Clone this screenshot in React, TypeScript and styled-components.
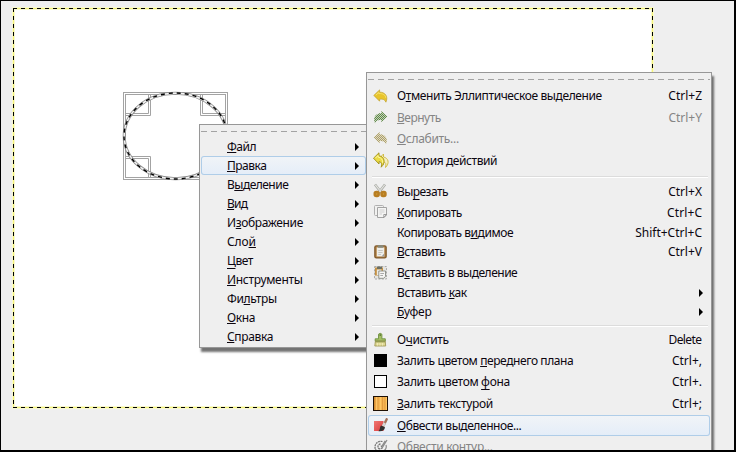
import React from "react";
import styled, { createGlobalStyle } from "styled-components";

const GlobalStyle = createGlobalStyle`
  body { margin: 0; background: #000; }
  * { box-sizing: border-box; }
`;

const Frame = styled.div`
  position: relative;
  width: 736px;
  height: 452px;
  overflow: hidden;
  background: #efefef;
  font-family: "Noto Sans", "Open Sans", sans-serif;
  font-size: 12px;
  color: #0c0610;
`;

const Bezel = styled.div`
  position: absolute;
  inset: 0;
  border: solid #000;
  border-width: 1px 2px 2px 1px;
  z-index: 5;
`;

const Artboard = styled.svg`
  position: absolute;
  left: 13px;
  top: 8px;
  width: 640px;
  height: 400px;
  display: block;
  overflow: visible;
`;

const MenuPanel = styled.div<{ $x: number; $y: number; $w: number }>`
  position: absolute;
  left: ${(p) => p.$x}px;
  top: ${(p) => p.$y}px;
  width: ${(p) => p.$w}px;
  display: flex;
  flex-direction: column;
  padding: 0 1px 1px;
  background: #efefef;
  border: 1px solid #979797;
  box-shadow: 2px 4px 2px 0 rgba(0, 0, 0, 0.55);
`;

const TearOff = styled.div`
  height: 12px;
  flex: none;
  padding: 6px 0 5px;
  background: repeating-linear-gradient(90deg, #a3a3a3 0 6px, transparent 6px 10px) content-box;
`;

const Row = styled.div<{ $h: number; $icons?: boolean; $active?: boolean; $muted?: boolean }>`
  display: flex;
  align-items: center;
  flex: none;
  height: ${(p) => p.$h}px;
  padding: 0 ${(p) => (p.$icons ? 8 : 7)}px 0 ${(p) => (p.$icons ? 5 : 26)}px;
  border-radius: 3px;
  color: ${(p) => (p.$muted ? "#858585" : "inherit")};
  background: ${(p) => (p.$active ? "linear-gradient(#f1f4f7, #e4edf8)" : "none")};
  box-shadow: ${(p) => (p.$active ? "inset 0 0 0 1px #afcde8" : "none")};
`;

const IconCell = styled.span<{ $top: number }>`
  flex: none;
  align-self: flex-start;
  width: 24px;
  height: 16px;
  margin-top: ${(p) => p.$top}px;
  svg { display: block; }
`;

const Label = styled.span<{ $track: number }>`
  flex: 1;
  white-space: pre;
  line-height: 16px;
  letter-spacing: ${(p) => p.$track}px;
`;

const Mnemonic = styled.span<{ $low: boolean }>`
  text-decoration: underline;
  text-decoration-thickness: 1px;
  text-decoration-skip-ink: none;
  text-underline-offset: ${(p) => (p.$low ? 3 : 1)}px;
`;

const Shortcut = styled.span<{ $track: number }>`
  white-space: pre;
  line-height: 16px;
  letter-spacing: ${(p) => p.$track}px;
  margin-right: ${(p) => -p.$track}px;
`;

const Arrow = styled.svg<{ $nudge?: number }>`
  flex: none;
  width: 4px;
  height: 8px;
  margin-right: ${(p) => -(p.$nudge ?? 0)}px;
`;

const Rule = styled.div`
  flex: none;
  height: 9px;
  margin: 0 2px 0 4px;
  padding: 4px 0 3px;
  background: linear-gradient(#dcdcdc 50%, #fff 50%) content-box;
`;

type IconName =
  | "undo" | "redo" | "fade" | "history" | "cut" | "copy" | "paste" | "pasteInto"
  | "clear" | "black" | "white" | "pattern" | "stroke" | "path";

const CURVED_ARROW = "M.8 7.4 6.6 1.9V4.2C12 4 15.6 8.4 12.9 14.2 12 11.6 10.2 10.8 6.6 11.2V13.2Z";

const icons: Record<IconName, React.ReactNode> = {
  undo: (
    <>
      <path d={CURVED_ARROW} fill="#e8c42c" stroke="#c0a12c" strokeWidth=".7" strokeLinejoin="round" />
      <path d="M2.8 7.2 5.8 4.5V5.6C10 5.3 12.5 7 12.8 9.8" fill="none" stroke="#f6e36c" />
    </>
  ),
  redo: (
    <g transform="translate(15 0) scale(-1 1)">
      <path d={CURVED_ARROW} fill="#c3d3b9" />
      <path d={CURVED_ARROW} fill="url(#dotGreen)" />
    </g>
  ),
  fade: (
    <>
      <path d={CURVED_ARROW} fill="#e0dac0" />
      <path d={CURVED_ARROW} fill="url(#dotTan)" />
    </>
  ),
  history: (
    <>
      <path d="M5.5 7 10.5 2V5C15.3 6 17 11 12.5 15.5 13.3 11.8 13 10.5 10.5 9.8V12.5Z" fill="#f5efc0" stroke="#cfb83c" strokeWidth=".9" />
      <path d="M.5 6.2 6 .8V3.8C11.5 4.6 13 10.5 8.2 15.2 9.2 11.5 8.5 10 6 9.6V12Z" fill="#ebdc46" stroke="#a08e18" strokeWidth=".9" />
      <path d="M2.5 6 5 3.5V5C8.5 5.5 10 8 9.7 11" fill="none" stroke="#fff8a0" />
    </>
  ),
  cut: (
    <>
      <path d="M2 1.5 8.5 10M12 1.5 5.5 10" stroke="#a9aba6" strokeWidth="2.6" />
      <path d="M2.3 1.8 8 9M11.7 1.8 6 9" stroke="#e5e5e0" strokeWidth="1.1" />
      <rect x="1.8" y="9" width="3.8" height="4" rx="1.4" fill="#cf9a35" stroke="#b87e22" strokeWidth="2.6" />
      <rect x="8.6" y="9" width="3.8" height="4" rx="1.4" fill="#cf9a35" stroke="#b87e22" strokeWidth="2.6" />
    </>
  ),
  copy: (
    <>
      <rect x="1.5" y="1.5" width="9" height="10" rx="1" fill="#f1f1f0" stroke="#b0b0b0" />
      <path d="M4.5 3.5H13.5V11L11 13.5H4.5Z" fill="#f4f4f3" stroke="#a3a3a3" />
      <path d="M6.5 6H11.5M6.5 8H11.5M6.5 10H9" stroke="#d0d0d0" />
      <path d="M13.5 10.5H10.8V13.5Z" fill="#fff" stroke="#858585" strokeWidth=".8" />
    </>
  ),
  paste: (
    <>
      <rect x="1.9" y="1.9" width="11.2" height="12" rx="1.4" fill="#b98a4e" stroke="#80592a" strokeWidth="1.4" />
      <path d="M3.8 3.5H11.2V12.4H3.8Z" fill="#eeeeea" />
      <rect x="4.8" y="1.2" width="5.6" height="2.6" rx=".8" fill="#868a7e" />
      <path d="M5.3 6.5H9.8M5.3 8.5H9.5M5.3 10.5H8" stroke="#c6c6c1" />
      <path d="M11.2 9.6 8.5 12.4H11.2Z" fill="#999" />
    </>
  ),
  pasteInto: (
    <>
      <rect x="1.5" y="1.5" width="12" height="12.5" fill="#e4e4e1" stroke="#aaa" strokeDasharray="2 1.4" />
      <path d="M2 2.5H10V10.5H2Z" fill="#c39042" />
      <path d="M3.8 4.5H8.5V10H3.8Z" fill="#ecebe3" />
      <rect x="4" y="1.5" width="5" height="2.5" fill="#6c7064" />
      <path d="M5.8 6H12.5V11.5L10.5 13.3H5.8Z" fill="#f6f6f4" stroke="#888b84" strokeWidth=".9" />
      <path d="M7.3 8.5H11M7.3 10.5H10" stroke="#aaa" />
    </>
  ),
  clear: (
    <>
      <path d="M5.5 2.2Q7.2 .4 8.9 2.2V6.8H12.3V9H2.2V6.8H5.5Z" fill="#a3bf63" stroke="#6e9140" strokeWidth=".9" />
      <path d="M2.4 9H12.2L12.7 14H1.8Z" fill="#e0d994" stroke="#a29a58" strokeWidth=".9" />
      <path d="M2.4 9.8H12.2" stroke="#7f8a42" />
      <path d="M7.2 2.2V4" stroke="#47632c" />
      <path d="M4.5 11V13.5M7 11V13.5M9.5 11V13.5" stroke="#eee9b8" />
    </>
  ),
  black: <rect x="1" y="1" width="13" height="13" fill="#000" />,
  white: <rect x="1.5" y="1.5" width="12" height="12" fill="#fff" stroke="#000" />,
  pattern: (
    <>
      <rect x=".5" y=".5" width="14" height="14" fill="#f5b552" stroke="#1d1005" />
      <path d="M1.8 1V14" stroke="#d3892f" strokeWidth="1.4" />
      <path d="M3.6 1V14" stroke="#ffc566" strokeWidth="1.4" />
      <path d="M5 1V14M9.5 1V14M12 1V14" stroke="#dd9638" strokeWidth=".8" />
      <path d="M7.5 1V14M13.4 1V14" stroke="#ffc863" strokeWidth="1.2" />
    </>
  ),
  stroke: (
    <>
      <rect x="1" y="3" width="9.5" height="10" fill="url(#redFill)" />
      <path d="M13.7 1.2 10.5 7.6" stroke="#a5725a" strokeWidth="2.4" strokeLinecap="round" />
      <path d="M11.8 5 10 8.2" stroke="#d6d6d6" strokeWidth="2.6" />
      <path d="M8 7.5 12 9.3C11.5 12.8 9 13.5 5.5 13.2 7.5 11.5 6.5 9 8 7.5Z" fill="#30302f" />
    </>
  ),
  path: (
    <>
      <path d="M9.5 2.5C6 1.5 2 4 2 8S5 13 8 12M7.5 5C4.5 5.2 4 9.5 7 10 9.8 10 9.5 6.8 7.7 7.2" fill="none" stroke="#777" strokeWidth="1.3" strokeDasharray="2 .6" />
      <path d="M14 1 8.7 9.7M12.2 1.8 9 7M13 6C14 9 12 12.5 8 13" stroke="#8b8b8b" strokeWidth="1.2" fill="none" />
    </>
  ),
};

const Icon = ({ name }: { name: IconName }) => (
  <svg width="16" height="16" viewBox="0 0 16 16" fill="none">{icons[name]}</svg>
);

type Item = {
  text: string;
  h: number;
  track?: number;
  low?: boolean;
  shortcut?: string;
  shortcutTrack?: number;
  icon?: IconName;
  iconTop?: number;
  arrow?: boolean;
  active?: boolean;
  muted?: boolean;
};

/* An underscore marks the letter that follows it as the mnemonic. */
const mainItems: Item[] = [
  { text: "_Файл", h: 19, track: -0.5 },
  { text: "_Правка", h: 19, track: -0.5, active: true },
  { text: "В_ыделение", h: 19, track: -0.52 },
  { text: "_Вид", h: 19, track: -0.7 },
  { text: "И_зображение", h: 19, track: -0.36 },
  { text: "Сло_й", h: 19, track: -0.1 },
  { text: "_Цвет", h: 19, track: -0.45, low: true },
  { text: "_Инструменты", h: 19, track: -0.3 },
  { text: "Фи_льтры", h: 19, track: -0.35 },
  { text: "_Окна", h: 19, track: -0.4 },
  { text: "_Справка", h: 19, track: -0.35 },
];

const editGroups: Item[][] = [
  [
    { text: "О_тменить Эллиптическое выделение", h: 22, track: -0.4, icon: "undo", iconTop: 3, shortcut: "Ctrl+Z" },
    { text: "_Вернуть", h: 21, track: -0.5, icon: "redo", shortcut: "Ctrl+Y", muted: true },
    { text: "_Ослабить...", h: 21, track: -0.3, icon: "fade", muted: true },
    { text: "_История действий", h: 23, track: -0.43, icon: "history", iconTop: 3 },
  ],
  [
    { text: "Вы_резать", h: 21, track: -0.55, icon: "cut", shortcut: "Ctrl+X", low: true },
    { text: "_Копировать", h: 21, track: -0.4, icon: "copy", shortcut: "Ctrl+C", shortcutTrack: 0.1 },
    { text: "Копировать в_идимое", h: 19, track: -0.44, shortcut: "Shift+Ctrl+C" },
    { text: "_Вставить", h: 20, track: -0.5, icon: "paste", shortcut: "Ctrl+V" },
    { text: "В_ставить в выделение", h: 21, track: -0.5, icon: "pasteInto", iconTop: 3 },
    { text: "Вставить _как", h: 19, track: -0.42, arrow: true },
    { text: "_Буфер", h: 19, track: -0.25, arrow: true },
  ],
  [
    { text: "О_чистить", h: 20, track: -0.4, icon: "clear", shortcut: "Delete", shortcutTrack: -0.6 },
    { text: "Залить цветом _переднего плана", h: 21, track: -0.41, icon: "black", iconTop: 3, shortcut: "Ctrl+," },
    { text: "Залить цветом _фона", h: 22, track: -0.34, icon: "white", iconTop: 3, shortcut: "Ctrl+.", low: true },
    { text: "_Залить текстурой", h: 22, track: -0.32, icon: "pattern", iconTop: 3, shortcut: "Ctrl+;" },
    { text: "_Обвести выделенное...", h: 21, track: -0.43, icon: "stroke", iconTop: 3, active: true },
    { text: "Обвести _контур...", h: 21, track: -0.32, icon: "path", iconTop: 3, muted: true },
  ],
];

const MenuText = ({ item }: { item: Item }) => {
  const [before, after] = item.text.split("_");
  return (
    <Label $track={item.track ?? 0}>
      {before}
      <Mnemonic $low={!!item.low}>{after[0]}</Mnemonic>
      {after.slice(1)}
    </Label>
  );
};

const SubmenuArrow = ({ nudge }: { nudge?: number }) => (
  <Arrow $nudge={nudge} viewBox="0 0 4 8"><path d="M0 0 4 4 0 8Z" fill="#000" /></Arrow>
);

const Canvas = () => (
  <Artboard viewBox="0 0 640 400" fill="none">
    <rect x=".5" y=".5" width="639" height="399" fill="#fff" stroke="#f9f9cf" strokeWidth="3" />
    <rect x=".5" y=".5" width="639" height="399" stroke="#f5f57c" />
    <path d="M0 .5H640M0 399.5H640M.5 0V400M639.5 0V400" stroke="#000" strokeDasharray="4 4" />
    <g transform="translate(110 84)">
      <g stroke="#a3a3a3">
        <rect x=".5" y=".5" width="104" height="87" />
        <rect x="2.5" y="2.5" width="100" height="83" />
        <path d="M25.5 2V21.5H2M27.5 2V23.5H2M79.5 2V21.5H103M77.5 2V23.5H103M25.5 86V66.5H2M27.5 86V64.5H2" />
      </g>
      <ellipse cx="52.5" cy="44" rx="51.3" ry="42.7" stroke="#8b8b8b" strokeWidth="3" />
      <ellipse cx="52.5" cy="44" rx="51.3" ry="42.7" stroke="#f4f4f4" strokeWidth="1.4" />
      <ellipse cx="52.5" cy="44" rx="51.5" ry="43" stroke="#000" strokeWidth="1.4" strokeDasharray="4 4" />
    </g>
  </Artboard>
);

const PatternDefs = styled.svg`
  position: absolute;
  width: 0;
  height: 0;
`;

export default function App() {
  return (
    <>
      <GlobalStyle />
      <Frame>
        <PatternDefs>
          <defs>
            <pattern id="dotGreen" width="2" height="2" patternUnits="userSpaceOnUse">
              <path d="M0 0H1V1H0ZM1 1H2V2H1Z" fill="#5f8748" />
            </pattern>
            <pattern id="dotTan" width="2" height="2" patternUnits="userSpaceOnUse">
              <path d="M0 0H1V1H0ZM1 1H2V2H1Z" fill="#ab9f6b" />
            </pattern>
            <linearGradient id="redFill" x1="0" x2="1" y1="0" y2="1">
              <stop offset="0" stopColor="#ef7774" />
              <stop offset="1" stopColor="#d93a3c" />
            </linearGradient>
          </defs>
        </PatternDefs>
        <Canvas />
        <MenuPanel $x={199} $y={124} $w={169}>
          <TearOff />
          {mainItems.map((item) => (
            <Row key={item.text} $h={item.h} $active={item.active}>
              <MenuText item={item} />
              <SubmenuArrow />
            </Row>
          ))}
        </MenuPanel>
        <MenuPanel $x={366} $y={72} $w={346}>
          <TearOff />
          {editGroups.map((group, i) => (
            <React.Fragment key={i}>
              {i > 0 && <Rule />}
              {group.map((item) => (
                <Row key={item.text} $h={item.h} $icons $active={item.active} $muted={item.muted}>
                  <IconCell $top={item.iconTop ?? 2}>{item.icon && <Icon name={item.icon} />}</IconCell>
                  <MenuText item={item} />
                  {item.shortcut && <Shortcut $track={item.shortcutTrack ?? 0}>{item.shortcut}</Shortcut>}
                  {item.arrow && <SubmenuArrow nudge={1} />}
                </Row>
              ))}
            </React.Fragment>
          ))}
        </MenuPanel>
        <Bezel />
      </Frame>
    </>
  );
}
